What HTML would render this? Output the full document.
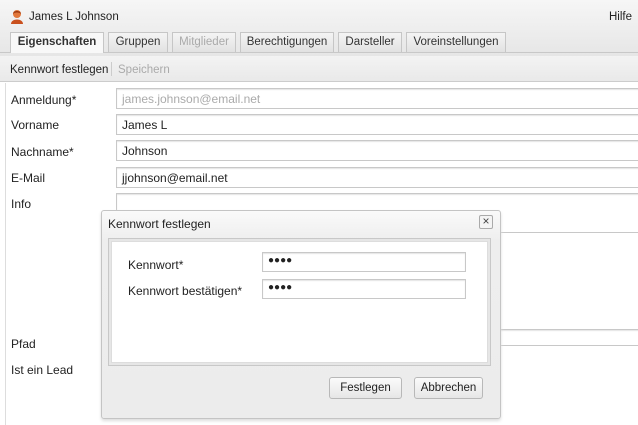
<!DOCTYPE html>
<html><head><style>
*{box-sizing:border-box;margin:0;padding:0}
body{width:638px;height:425px;background:#fff;font-family:"Liberation Sans",sans-serif;font-size:12px;color:#222;position:relative;overflow:hidden}
.a{position:absolute}
.inp{position:absolute;border:1px solid #c8c8c8;background:#fff;height:21px;padding:3px 5px;font-size:12px;box-shadow:inset 0 1px 1px #e4e4e4}
.lbl{position:absolute;font-size:12px;color:#222}
.tab{position:absolute;top:32px;height:20px;border:1px solid #c6c6c6;border-bottom:none;background:linear-gradient(#f4f4f4,#e2e2e2);font-size:11.5px;text-align:center;line-height:18px;color:#333}
.btn{position:absolute;height:22px;border:1px solid #b8b8b8;border-radius:3px;background:linear-gradient(#fbfbfb,#e6e6e6);text-align:center;line-height:20px;font-size:11.5px}
</style></head><body>
<div class="a" style="left:0;top:0;width:638px;height:56px;background:linear-gradient(#f6f6f6,#e6e6e6)"></div>
<div class="a" style="left:0;top:52px;width:638px;height:1px;background:#c8c8c8"></div>
<svg class="a" style="left:10px;top:9px" width="14" height="16" viewBox="0 0 14 16"><circle cx="7" cy="5" r="4" fill="#e2773a"/><path d="M1 15 C1 9 13 9 13 15Z" fill="#c9501e"/><path d="M3 5 C3 1 11 1 11 5 C10 3 4 3 3 5Z" fill="#9c3a12"/></svg>
<div class="lbl" style="left:29px;top:11px;font-size:11.5px">James L Johnson</div>
<div class="lbl" style="left:609px;top:11px;font-size:11.5px">Hilfe</div>
<div class="tab" style="left:10px;width:94px;background:#f8f8f8;font-weight:bold;height:21px">Eigenschaften</div>
<div class="tab" style="left:108px;width:60px">Gruppen</div>
<div class="tab" style="left:172px;width:64px;color:#aaa">Mitglieder</div>
<div class="tab" style="left:240px;width:94px">Berechtigungen</div>
<div class="tab" style="left:338px;width:64px">Darsteller</div>
<div class="tab" style="left:406px;width:100px">Voreinstellungen</div>
<div class="a" style="left:0;top:56px;width:638px;height:26px;background:linear-gradient(#f3f3f3,#e9e9e9);border-bottom:1px solid #ccc"></div>
<div class="lbl" style="left:10px;top:64px;font-size:11.5px">Kennwort festlegen</div>
<div class="a" style="left:111px;top:62px;width:1px;height:14px;background:#ccc"></div>
<div class="lbl" style="left:118px;top:64px;font-size:11.5px;color:#aaa">Speichern</div>
<div class="a" style="left:5px;top:83px;width:1px;height:342px;background:#ddd"></div>
<div class="lbl" style="left:11px;top:93px">Anmeldung*</div>
<div class="inp" style="left:116px;top:88px;width:530px;color:#aaa">james.johnson@email.net</div>
<div class="lbl" style="left:11px;top:118px">Vorname</div>
<div class="inp" style="left:116px;top:114px;width:530px">James L</div>
<div class="lbl" style="left:11px;top:145px">Nachname*</div>
<div class="inp" style="left:116px;top:140px;width:530px">Johnson</div>
<div class="lbl" style="left:11px;top:171px">E-Mail</div>
<div class="inp" style="left:116px;top:167px;width:530px">jjohnson@email.net</div>
<div class="lbl" style="left:11px;top:197px">Info</div>
<div class="inp" style="left:116px;top:193px;width:530px;height:40px"></div>
<div class="lbl" style="left:11px;top:337px">Pfad</div>
<div class="inp" style="left:116px;top:329px;width:530px;height:17px"></div>
<div class="lbl" style="left:11px;top:363px">Ist ein Lead</div>
<div class="a" style="left:101px;top:210px;width:400px;height:209px;border:1px solid #c4c4c4;border-radius:3px;background:linear-gradient(#fafafa,#eeeeee 30px,#ececec);box-shadow:0 2px 3px #ddd"></div>
<div class="lbl" style="left:108px;top:217px">Kennwort festlegen</div>
<div class="a" style="left:479px;top:215px;width:14px;height:14px;border:1px solid #aaa;border-radius:2px;background:#f4f4f4;font-size:12px;line-height:11px;text-align:center;color:#444">×</div>
<div class="a" style="left:108px;top:238px;width:383px;height:128px;border:1px solid #c8c8c8;background:#fff;outline:3px solid #e6e6e6;outline-offset:-4px"></div>
<div class="a" style="left:111px;top:241px;width:377px;height:122px;border:1px solid #ddd;background:#fff"></div>
<div class="lbl" style="left:128px;top:258px">Kennwort*</div>
<div class="inp" style="left:262px;top:252px;width:204px;height:20px;font-size:10px;line-height:12px;padding-top:2px">●●●●</div>
<div class="lbl" style="left:128px;top:284px">Kennwort bestätigen*</div>
<div class="inp" style="left:262px;top:279px;width:204px;height:20px;font-size:10px;line-height:12px;padding-top:2px">●●●●</div>
<div class="btn" style="left:329px;top:377px;width:73px">Festlegen</div>
<div class="btn" style="left:414px;top:377px;width:69px">Abbrechen</div>
</body></html>
